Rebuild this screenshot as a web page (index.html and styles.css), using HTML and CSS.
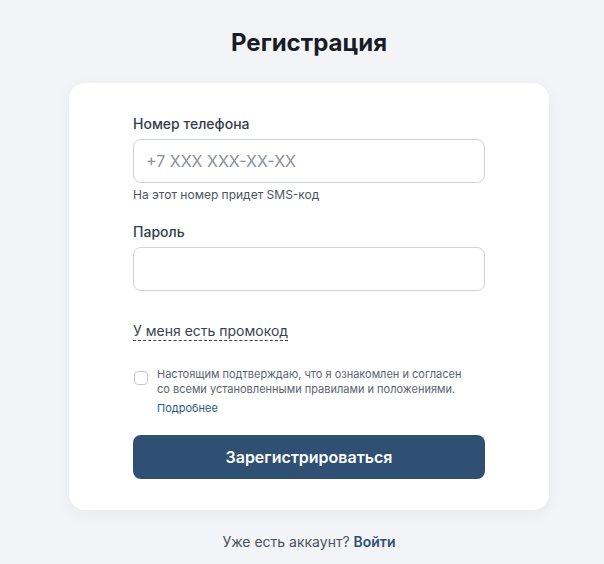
FILE: index.html
```html
<!DOCTYPE html>
<html lang="ru">
<head>
    <meta charset="UTF-8">
    <meta name="viewport" content="width=device-width, initial-scale=1.0">
    <title>Регистрация</title>
    <link rel="stylesheet" href="styles.css">
</head>
<body>
    <div class="page">
        <h1>Регистрация</h1>

        <form class="card">
            <div class="form-group">
                <label for="phone">Номер телефона</label>
                <input type="tel" id="phone" placeholder="+7 XXX XXX-XX-XX">
                <div class="hint">На этот номер придет SMS-код</div>
            </div>

            <div class="form-group">
                <label for="password">Пароль</label>
                <input type="password" id="password">
            </div>

            <div class="promo">
                <a href="#" class="promo-link">У меня есть промокод</a>
            </div>

            <div class="agree">
                <input type="checkbox" id="agree" class="checkbox">
                <div class="agree-text">
                    <label for="agree">Настоящим подтверждаю, что я ознакомлен и согласен со всеми установленными правилами и положениями.</label>
                    <a href="#" class="more">Подробнее</a>
                </div>
            </div>

            <button type="submit" class="submit-btn">Зарегистрироваться</button>
        </form>

        <p class="login">Уже есть аккаунт? <a href="#">Войти</a></p>
    </div>
</body>
</html>
```

FILE: styles.css
```css
* {
    margin: 0;
    padding: 0;
    box-sizing: border-box;
}

body {
    font-family: Inter, 'Noto Sans', sans-serif;
    background: #f3f4f7;
    color: #1f2633;
    padding-left: 14px;
}

.page {
    width: 480px;
    margin: 0 auto;
    padding-top: 28px;
}

h1 {
    text-align: center;
    font-size: 24px;
    font-weight: 700;
    line-height: 30px;
    color: #171c26;
    margin-bottom: 25px;
}

.card {
    background: white;
    border-radius: 16px;
    padding: 31px 64px 31px;
    box-shadow: 0 4px 16px rgba(30, 40, 60, 0.05);
}

.form-group {
    margin-bottom: 19px;
}

.form-group label {
    display: block;
    font-size: 14px;
    font-weight: 500;
    line-height: 20px;
    color: #363e4c;
    margin-bottom: 5px;
}

.form-group input {
    width: 100%;
    height: 44px;
    border: 1px solid #cfd3dc;
    border-radius: 8px;
    padding: 0 12px;
    font-family: inherit;
    font-size: 16px;
    color: #1f2633;
    background: white;
    outline: none;
}

.form-group input::placeholder {
    color: #8a909c;
}

.hint {
    font-size: 12px;
    line-height: 16px;
    color: #4c5462;
    margin-top: 4px;
}

.promo {
    padding-top: 10px;
    margin-bottom: 26px;
}

.promo-link {
    font-size: 14px;
    line-height: 20px;
    color: #3a4252;
    text-decoration: none;
    border-bottom: 1px dashed #3a4252;
    padding-bottom: 1px;
}

.agree {
    display: flex;
    gap: 9px;
    margin-bottom: 19px;
}

.checkbox {
    appearance: none;
    width: 14px;
    height: 14px;
    border: 1px solid #c3c8d2;
    border-radius: 4px;
    background: white;
    flex-shrink: 0;
    margin: 4px 0 0 1px;
}

.agree-text {
    font-size: 11px;
    line-height: 15px;
    color: #5b6371;
}

.agree-text label {
    display: block;
    width: 310px;
}

.more {
    display: block;
    margin-top: 4px;
    color: #2c5a8c;
    text-decoration: none;
}

.submit-btn {
    width: 100%;
    height: 44px;
    border: none;
    border-radius: 8px;
    background: #2f4f73;
    color: white;
    font-family: inherit;
    font-size: 16px;
    font-weight: 600;
    cursor: pointer;
}

.login {
    text-align: center;
    font-size: 14px;
    line-height: 20px;
    color: #4a5261;
    margin-top: 22px;
}

.login a {
    color: #2f4f73;
    font-weight: 600;
    text-decoration: none;
}
```
